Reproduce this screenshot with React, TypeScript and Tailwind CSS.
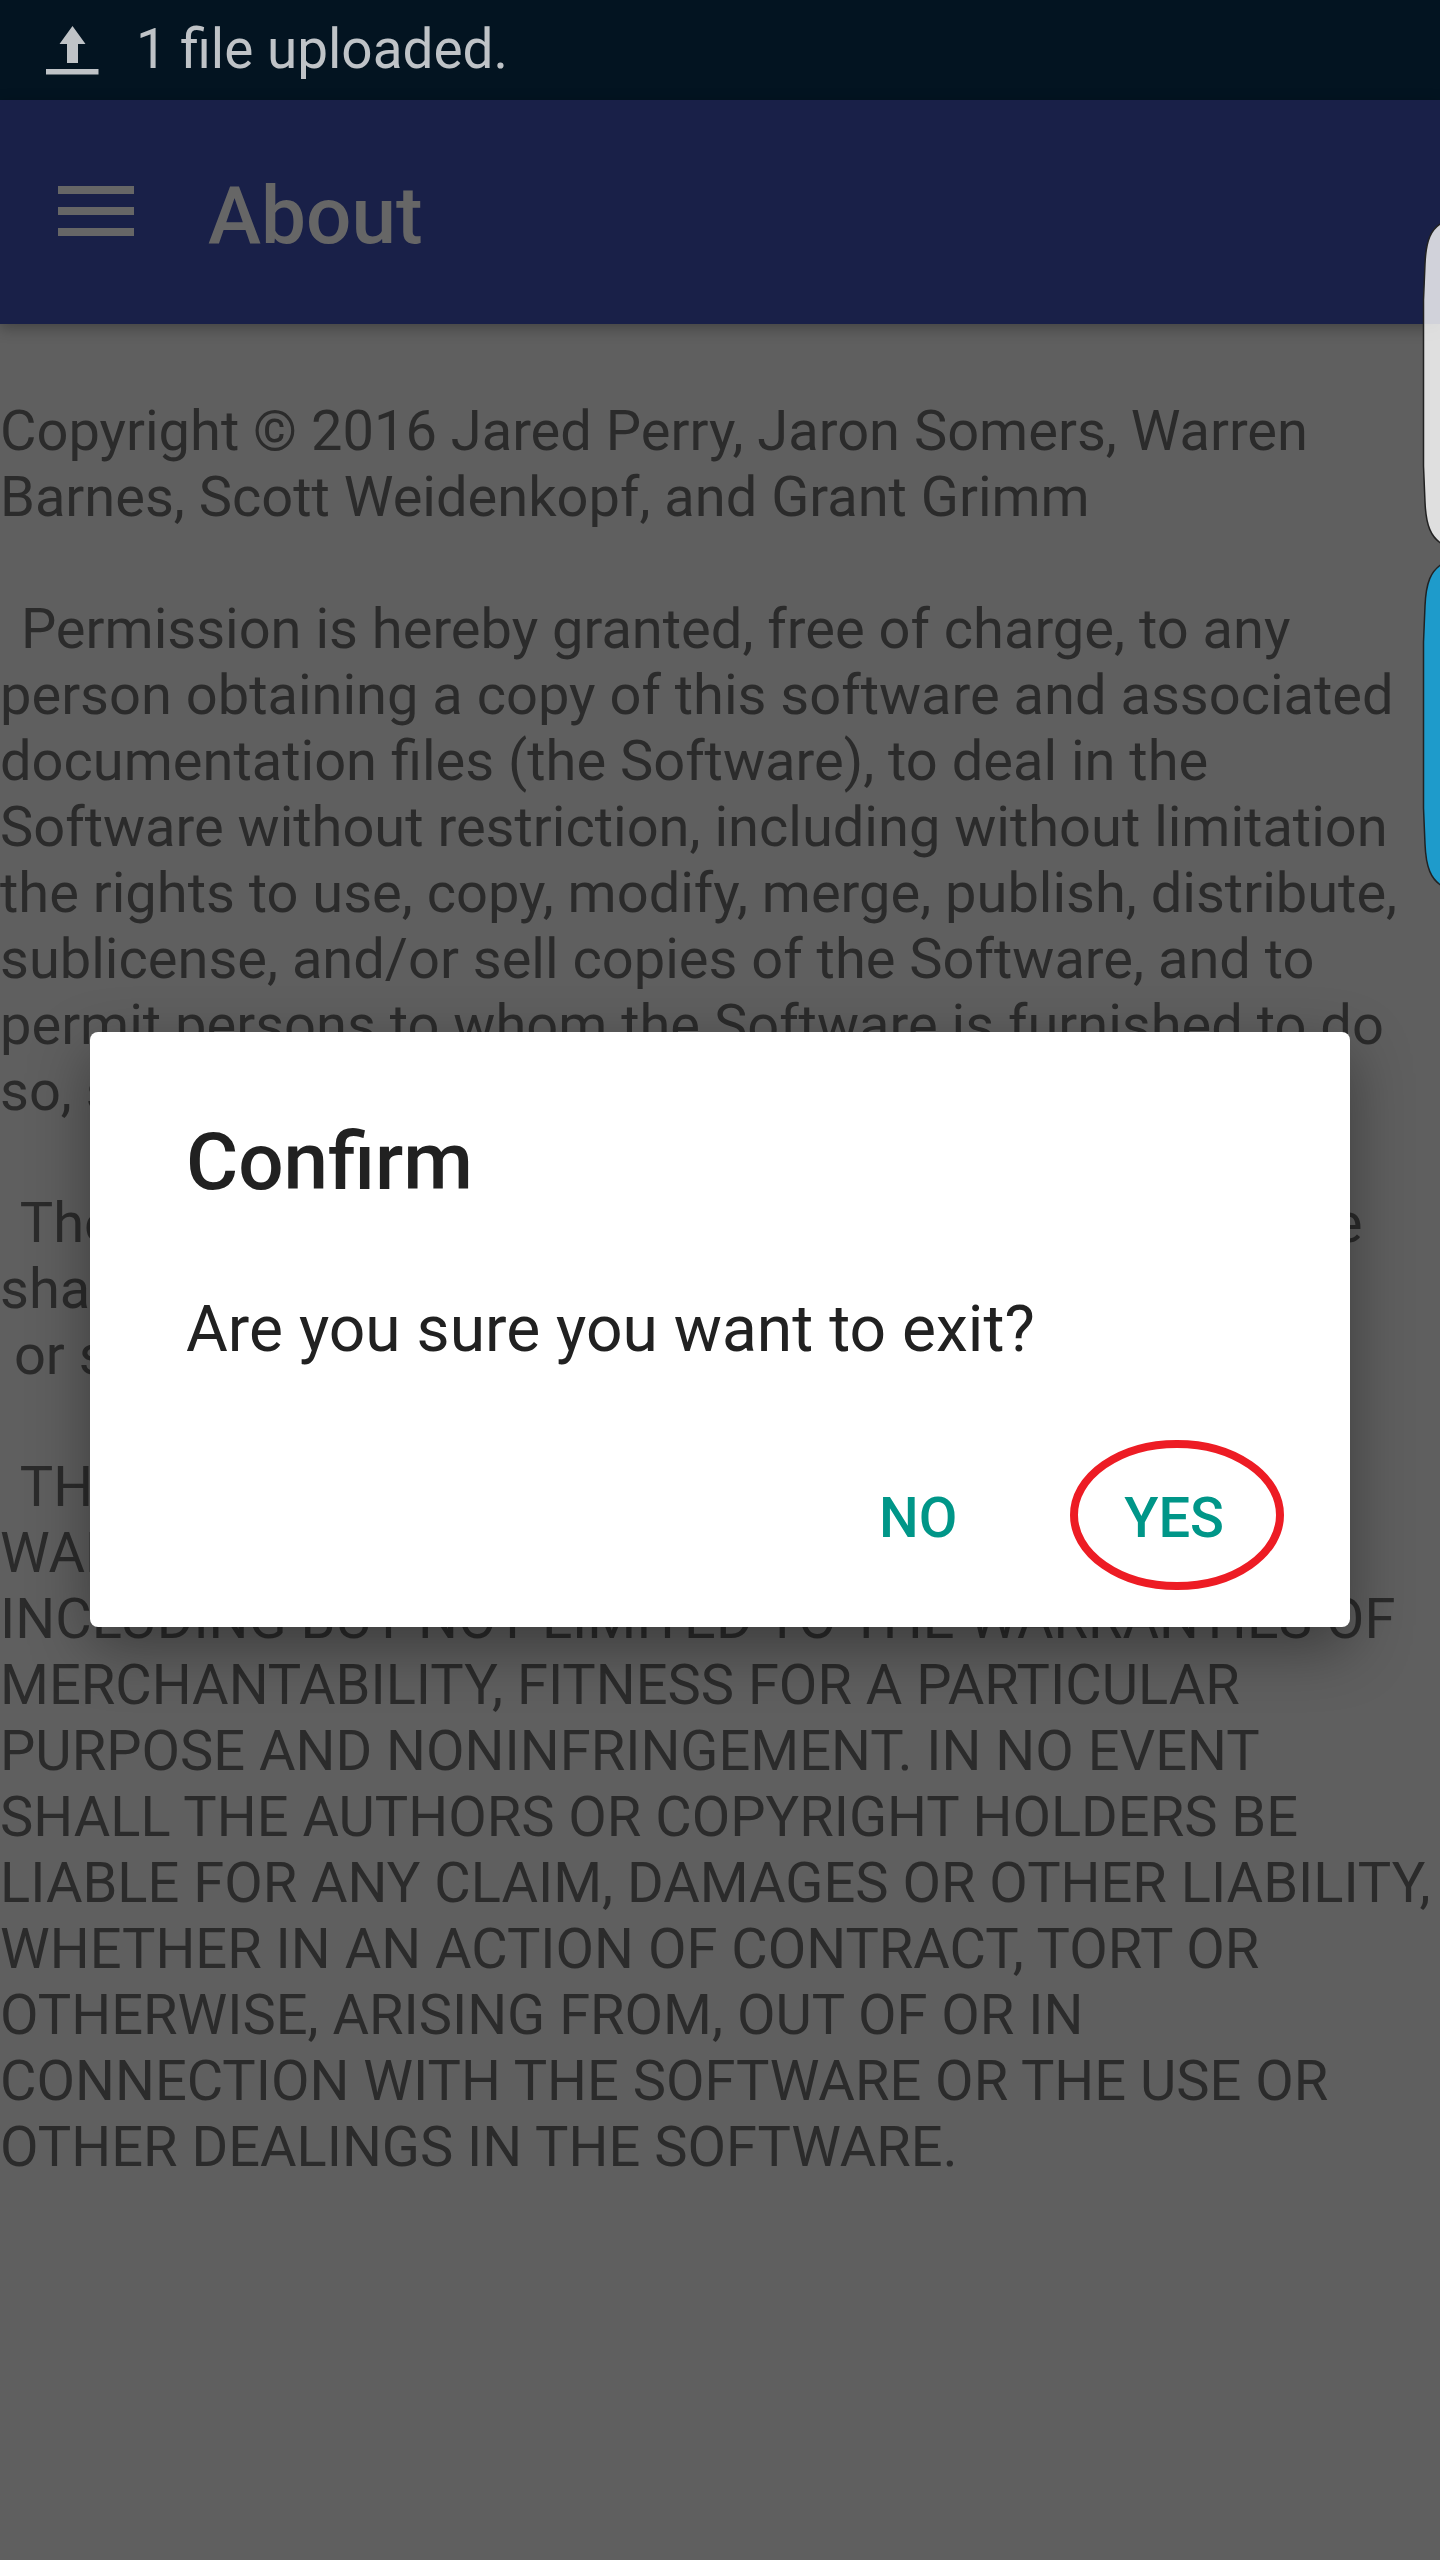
const LICENSE = [
  'Copyright © 2016 Jared Perry, Jaron Somers, Warren',
  'Barnes, Scott Weidenkopf, and Grant Grimm',
  '',
  ' Permission is hereby granted, free of charge, to any',
  'person obtaining a copy of this software and associated',
  'documentation files (the Software), to deal in the',
  'Software without restriction, including without limitation',
  'the rights to use, copy, modify, merge, publish, distribute,',
  'sublicense, and/or sell copies of the Software, and to',
  'permit persons to whom the Software is furnished to do',
  'so, subject to the following conditions:',
  '',
  ' The above copyright notice and this permission notice',
  'shall be included in all copies',
  ' or substantial portions of the Software.',
  '',
  ' THE SOFTWARE IS PROVIDED AS IS, WITHOUT',
  'WARRANTY OF ANY KIND, EXPRESS OR IMPLIED,',
  'INCLUDING BUT NOT LIMITED TO THE WARRANTIES OF',
  'MERCHANTABILITY, FITNESS FOR A PARTICULAR',
  'PURPOSE AND NONINFRINGEMENT. IN NO EVENT',
  'SHALL THE AUTHORS OR COPYRIGHT HOLDERS BE',
  'LIABLE FOR ANY CLAIM, DAMAGES OR OTHER LIABILITY,',
  'WHETHER IN AN ACTION OF CONTRACT, TORT OR',
  'OTHERWISE, ARISING FROM, OUT OF OR IN',
  'CONNECTION WITH THE SOFTWARE OR THE USE OR',
  'OTHER DEALINGS IN THE SOFTWARE.',
]

function StatusBar() {
  return (
    <div className="flex h-[100px] items-center bg-[#031421] pl-[45px] text-[#bfc3c7]">
      <svg width="54" height="50" viewBox="0 0 54 50" fill="currentColor" aria-hidden="true">
        <path d="M27.500 1 40.500 19H33V38H22V19H14.500Z" />
        <rect x="1" y="44" width="52.500" height="5.500" />
      </svg>
      <span className="mb-[3px] ml-[37px] origin-left scale-x-[0.98] text-[56px] leading-[66px]">1 file uploaded.</span>
    </div>
  )
}

function AppBar() {
  return (
    <header className="relative flex h-[224px] items-center bg-[#192048] pl-[58px] text-[#666666] shadow-[0_4px_14px_rgba(0,0,0,0.3)]">
      <button aria-label="Menu" className="mt-[-2px] flex w-[76px] flex-col gap-[13px]">
        <span className="h-2 bg-current" />
        <span className="h-2 bg-current" />
        <span className="h-2 bg-current" />
      </button>
      <h1 className="ml-[74px] mt-[7px] text-[80px] font-medium leading-[94px]">About</h1>
    </header>
  )
}

function EdgeHandles() {
  return (
    <svg className="absolute right-0 top-[220px]" width="18" height="670" viewBox="0 0 18 670" aria-hidden="true">
      <path
        d="M20 3C9 9 4 20 3 44L1.500 80V246L3 282C4 306 9 317 20 324Z"
        fill="#fff"
        fillOpacity="0.8"
        stroke="#222"
        strokeWidth="1.500"
      />
      <path
        d="M20 344C9 351 4 362 3 386L1.500 422V588L3 624C4 648 9 659 20 666Z"
        fill="#1e9bcb"
        stroke="#222"
        strokeWidth="1.500"
      />
    </svg>
  )
}

function ConfirmDialog() {
  return (
    <div
      role="dialog"
      className="absolute left-[90px] top-[1032px] flex h-[595px] w-[1260px] flex-col rounded-[8px] bg-white px-24 pt-[83px] text-[#212121] shadow-[0_20px_60px_rgba(0,0,0,0.38)]"
    >
      <h2 className="text-[80px] font-medium leading-[94px]">Confirm</h2>
      <p className="mt-[83px] origin-left scale-x-[1.002] text-[64px] leading-[76px]">Are you sure you want to exit?</p>
      <div className="mt-[117px] flex justify-end text-[56px] font-medium leading-[66px] text-[#009688]">
        <button className="mr-[167px]">NO</button>
        <span className="relative mr-[30px]">
          <button>YES</button>
          <svg className="absolute left-[-54px] top-[-45px] max-w-none" width="214" height="150" viewBox="0 0 214 150" aria-hidden="true">
            <ellipse cx="107" cy="75" rx="103" ry="71" fill="none" stroke="#ed1c24" strokeWidth="8" />
          </svg>
        </span>
      </div>
    </div>
  )
}

export default function App() {
  return (
    <div className="relative h-[2560px] w-[1440px] overflow-hidden bg-[#5f5f5f] font-['Roboto',sans-serif]">
      <StatusBar />
      <AppBar />
      <main className="pt-[74px] text-[56px] leading-[66px] text-[#2b2b2b]">
        {LICENSE.map((line, i) => {
          const opensParagraph = line.startsWith(' ') && LICENSE[i - 1] === ''
          return (
            <p key={i} className={opensParagraph ? 'h-[66px] whitespace-pre pl-[7px]' : 'h-[66px] whitespace-pre'}>
              {line}
            </p>
          )
        })}
      </main>
      <ConfirmDialog />
      <EdgeHandles />
    </div>
  )
}
